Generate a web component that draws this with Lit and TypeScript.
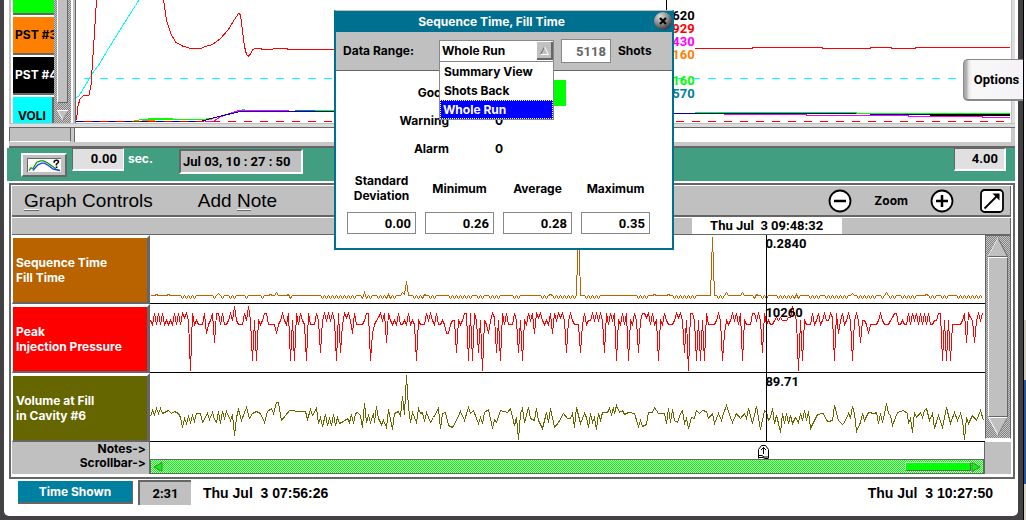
import { LitElement, html, css, nothing } from "lit";
import { customElement, property, state } from "lit/decorators.js";

type Sample = [number, number];

const HISTORY_START = 150;
const HISTORY_WIDTH = 835;
const CURSOR_X = 766;

/* Injection pressure: one level per shot, a shot every two units. */
const PRESSURE_LEVELS = [306.5, 313.5, 317.5, 320.5, 324.5, 333.5, 342.5, 352.5, 360.5, 371];
const PRESSURE =
  "3414141434" + "3414141213" + "9143444154" + "3161141443" + "1303444130" + "3838343114" +
  "4445431341" + "8381413481" + "4441373131" + "31381741" +
  "2135144443" + "1185432131" + "6134341443" + "4143483444" + "1313414434" + "5543373431" +
  "1818137393" + "4531273814" + "1444137383" + "4131512134" + "3415131213" + "7313444741" +
  "4331313137" + "1413183414" + "1834137311" + "2141438341" + "34443121" +
  "3739113838" + "3814444313" + "8534313141" + "8344411313" + "7143443232" + "3332201393" +
  "8344414314" + "3133128153" + "1431383136" + "3345444431" + "3444321144" + "3441413141" +
  "4141443311" + "8383844444" + "3161236313" + "1";

const pressureTrace: Sample[] = [...PRESSURE].map((level, i) => [
  HISTORY_START + 0.5 + i * 2,
  PRESSURE_LEVELS[Number(level)],
]);

/* Fill time: flat, with short runs of jitter and a few peaks. */
const FILL_JITTER: Sample[] = [
  [181, 197], [211, 218], [220, 224], [229, 236], [243, 246], [262, 265], [289, 292], [319, 354],
  [361, 372], [378, 386], [390, 394], [414, 422], [427, 437], [447, 470], [475, 485], [489, 499],
  [513, 519], [539, 549], [553, 575], [583, 601], [637, 649], [674, 694], [715, 727], [751, 756],
  [759, 766], [775, 800], [810, 820], [826, 834], [838, 849], [856, 874], [879, 885], [889, 897],
  [902, 915], [928, 937], [941, 947], [958, 982],
];
const FILL_PEAKS = new Map<number, number>([
  [156, 294], [168, 294], [218, 293], [270, 294], [276, 292], [288, 294], [364, 292], [388, 294],
  [402, 292], [404, 294], [406, 281], [424, 294], [550, 294], [578, 215], [654, 294], [668, 294],
  [712, 237], [726, 292], [742, 292], [756, 294], [796, 294], [852, 293], [886, 292], [926, 294],
]);

const fillTrace: Sample[] = [];
for (let x = HISTORY_START; x <= 983; x += 2) {
  const peak = FILL_PEAKS.get(x);
  const jitter = FILL_JITTER.some(([a, b]) => x >= a && x <= b) && x % 4 === 2;
  fillTrace.push([x + 0.5, (peak ?? (jitter ? 298 : 295)) + 0.5]);
}

const VOLUME = `150,416 152,410 154,414 156,408 158,413 160,408 162,413 168,410 171,413 174,411 178,413 180,417
182,427 184,418 186,423 188,416 190,422 192,415 194,421 196,413 200,413 202,422 207,413 209,419 212,412 214,419
216,422 218,411 220,423 222,411 224,418 226,411 230,420 232,414 234,435 236,417 238,409 241,420 246,407 249,418
252,413 256,411 260,413 264,422 267,411 271,408 273,413 276,402 278,402 281,420 289,410 300,411 305,411 307,419
310,409 312,415 316,408 318,423 320,417 322,426 325,414 327,425 329,418 331,425 333,414 335,425 337,417 339,423
343,421 347,418 349,422 351,414 353,423 355,413 357,412 360,415 362,427 364,403 366,422 368,415 370,422 373,413
374,422 376,406 378,418 381,424 383,420 386,427 388,409 392,429 394,413 398,411 400,416 402,396 404,414 406,375
408,407 410,422 412,412 416,422 418,408 420,413 422,412 424,421 426,412 430,422 433,417 438,408 440,428 442,413
445,412 448,425 452,427 456,420 460,411 464,420 468,407 470,413 473,410 478,423 480,417 482,423 484,412 488,409
492,428 494,419 496,422 500,410 507,412 510,408 514,425 516,417 518,439 520,413 522,408 524,422 528,407 530,418
534,420 536,408 538,420 542,428 546,412 548,422 550,408 554,427 558,422 563,413 567,418 570,418 572,413 574,427
576,407 580,423 584,413 586,417 588,427 590,413 592,422 594,417 596,429 598,413 600,420 602,412 607,412 609,408
611,414 613,407 614,413 616,405 619,412 622,410 624,414 628,412 634,413 638,426 640,420 642,426 646,424 648,412
652,412 654,407 658,413 664,413 666,423 668,408 670,422 672,409 674,420 677,422 680,413 682,410 684,423 686,418
688,428 691,417 694,418 696,410 699,413 702,410 706,411 708,418 712,413 714,423 718,413 721,420 723,413 726,405
730,417 732,422 736,413 740,418 744,413 746,418 748,408 752,423 756,406 760,429 764,410 766,412 768,420 770,417
772,408 774,423 776,415 778,423 780,432 782,413 784,423 786,413 788,423 790,415 792,423 795,417 798,422 800,413
802,420 804,410 806,420 808,411 810,428 814,420 817,414 823,413 826,420 828,421 832,420 834,405 838,420 842,424
844,422 848,413 850,417 852,406 854,413 856,431 860,422 862,413 864,420 868,412 874,413 876,412 878,423 880,413
882,422 884,413 886,403 888,413 890,415 892,425 897,412 903,410 907,413 908,423 910,418 912,432 914,412 916,417
920,412 922,417 924,410 926,408 929,420 932,413 934,428 938,415 942,427 946,407 948,415 950,423 954,412 957,420
960,413 962,420 964,439 966,417 968,423 972,415 976,420 980,410 983,420`;
const volumeTrace = VOLUME.split(/\s+/).map((p) => p.split(",").map((n) => Number(n) + 0.5) as Sample);

const toPoints = (trace: Sample[]) => trace.map((p) => p.join(",")).join(" ");

const base = css`
  *,
  *::before,
  *::after {
    box-sizing: border-box;
  }
  button,
  input,
  select {
    font: inherit;
    color: inherit;
    margin: 0;
    border-radius: 0;
  }
  svg {
    display: block;
  }
  .stipple {
    background: repeating-conic-gradient(#808080 0 25%, #c8c8c8 0 50%) 0 0 / 2px 2px;
  }
`;

@customElement("cycle-plot")
class CyclePlot extends LitElement {
  static styles = [
    base,
    css`
      :host {
        display: grid;
        grid-template-columns: 67px minmax(0, 1fr) 4px;
        background: #c0c0c0;
        border-bottom: 1px solid #666;
      }
      .channels {
        display: grid;
        grid-template-columns: 43px 17px 5px;
        height: 123px;
        overflow: hidden;
        border-left: 2px solid #c0c0c0;
      }
      .list {
        display: flex;
        flex-direction: column;
        justify-content: flex-end;
        overflow: hidden;
        background: #fff;
        min-width: 0;
      }
      .channel {
        flex: none;
        width: 52px;
        height: 38px;
        margin: 0 0 2px 2px;
        padding: 0 0 0 2px;
        border: 0;
        border-bottom: 2px solid #666;
        text-align: left;
        white-space: nowrap;
      }
      .channel.last {
        height: 26px;
        width: 41px;
        margin-bottom: 0;
        padding: 12px 0 0 5px;
        border-bottom: 0;
        border-right: 2px solid #666;
        line-height: 12px;
      }
      .green { background: #0f0; }
      .orange { background: #ff8000; color: #000; }
      .black { background: #000; color: #fff; }
      .cyan { background: #0ff; color: #000; }
      .scroll {
        display: flex;
        flex-direction: column;
        justify-content: space-between;
        align-items: center;
      }
      .thumb {
        width: 11px;
        height: 103px;
        background: #c0c0c0;
        border: solid #666;
        border-width: 0 1px 1px 0;
        border-left: 1px solid #fff;
      }
      .down { width: 12px; height: 14px; }
      .gap {
        background: #c0c0c0;
        border-left: 2px solid #fff;
        border-right: 1px solid #666;
      }
      .canvas {
        position: relative;
        background: #fff;
      }
      .canvas svg { width: 100%; height: 122px; }
      .readings {
        position: absolute;
        top: 9px;
        left: 63.6%;
        width: 24px;
        text-align: right;
        font: bold 13px/13px Roboto, sans-serif;
      }
      .readings .skip { height: 13px; }
      .edge { border-left: 1px solid #c0c0c0; background: #ddd; }
      .rail {
        grid-column: 1 / -1;
        height: 4px;
        background: #ddd;
        border-top: 1px solid #c0c0c0;
      }
    `,
  ];

  render() {
    const readings: [string, string][] = [
      ["620", "#000"], ["929", "#f00"], ["430", "#f0f"], ["160", "#ff8000"],
      ["", ""], ["160", "#0f0"], ["570", "#0080a0"],
    ];
    return html`
      <div class="channels">
        <div class="list">
          <button class="channel green" aria-label="PST 2"></button>
          <button class="channel orange">PST #3</button>
          <button class="channel black">PST #4</button>
          <button class="channel cyan last">VOLI</button>
        </div>
        <div class="scroll stipple">
          <div class="thumb"></div>
          <svg class="down" viewBox="0 0 12 14">
            <path d="M.5 1.5h11L6 11z" fill="#c0c0c0" stroke="#fff" />
            <path d="M11.5 1.5 6 11" fill="none" stroke="#666" />
          </svg>
        </div>
        <div class="gap"></div>
      </div>
      <div class="canvas">
        <svg viewBox="76 0 935 122" preserveAspectRatio="none" fill="none" shape-rendering="crispEdges">
          <path d="M84 78.5H957" stroke="#0ff" stroke-dasharray="8 8" />
          <path d="M76.5 97.5 79 96 92 74l8-11 10-17 20-32 9-14" stroke="#0ff" />
          <path
            d="M76.500 120 78 106l2-7 3-3 6-1 2-10 1-15 2-30L96.500 0M163.500 0l3 20 4 13 5 9 7 4 8 2.500h10l5-2 7-2 8-6 8-9 6-10 4-6 2 1 2 17 2 15 2 8 2 1.500 2-2 2-4 3-2h4l3 1.500h8l5-1h10l4 1h49M695 48.500h57v-1h70v1h48v-1h21v1h24v-1h95"
            stroke="#f00"
          />
          <path d="M134 121l8-1.500h58M142 119.500l13-1h17v1h28l12-1 28-8 5-1" stroke="#0f0" />
          <path d="M142 120.500h13M208 119.500h4" stroke="#ff8000" />
          <path d="M205 121.500h8l8-5 18-6h50" stroke="#f0f" />
          <path d="M76 121.500h124l15-4 25-6h58M295 111.500h45M673 113.500h135l122 1h80" stroke="#00a" />
          <path d="M295 110.500h20" stroke="#0080a0" />
          <path d="M315 110.500h20M695 112.500h161v1h154" stroke="#0f0" />
          <path d="M724 114.500h82v1h102v1h74v1h28" stroke="#f0f" />
          <path d="M930 114.500h80" stroke="#000" stroke-width="2" />
          <path d="M84 121.500h926" stroke="#f00" stroke-dasharray="8 8" />
          <path d="M666.500 0v122" stroke="#000" />
        </svg>
        <div class="readings">
          ${readings.map(([value, color]) =>
            value ? html`<div style="color:${color}">${value}</div>` : html`<div class="skip"></div>`)}
        </div>
      </div>
      <div class="edge"></div>
      <div class="rail"></div>
    `;
  }
}

@customElement("time-bar")
class TimeBar extends LitElement {
  static styles = [
    base,
    css`
      :host { display: block; }
      .strip {
        display: grid;
        grid-template-columns: 62px minmax(0, 1fr);
        gap: 3px;
        height: 20px;
        padding: 0 4px 4px 0;
        margin: 0 0 0 2px;
        background: #c8c8c8;
        border-bottom: 2px solid #666;
      }
      .blank {
        border-left: 1px solid #666;
        border-bottom: 1px solid #fff;
        border-right: 1px solid #666;
        background: #c0c0c0;
      }
      .white { background: #fff; border-left: 1px solid #666; }
      .green {
        display: flex;
        align-items: flex-start;
        height: 33px;
        padding: 0 9px 0 14px;
        background: #429e80;
        font: bold 13px/16px Roboto, sans-serif;
      }
      .trend {
        width: 46px;
        height: 24px;
        margin: 5px 5px 0 0;
        padding: 3px 4px;
        background: #c0c0c0;
        border: 2px solid;
        border-color: #fff #666 #666 #fff;
      }
      .trend svg { width: 100%; height: 100%; background: #fff; border: 1px solid #666; border-width: 1px 0 0 1px; }
      .num {
        width: 52px;
        height: 23px;
        padding: 0 6px 2px 0;
        text-align: right;
        border: 1px solid #666;
        border-color: #666 #fff #fff #666;
        border-bottom-width: 2px;
        background: #e0e0e0;
      }
      .unit { margin: 3px 26px 0 4px; color: #fff; font: bold 12px/16px Inter, sans-serif; }
      .stamp {
        width: 124px;
        height: 25px;
        margin-top: 1px;
        padding: 0 2px;
        border: 2px solid;
        border-color: #666 #fff #fff #666;
        background: #c0c0c0;
      }
      .spacer { flex: 1; }
      .end { border-right-width: 2px; }
    `,
  ];

  render() {
    return html`
      <div class="strip"><div class="blank"></div><div class="white"></div></div>
      <div class="green">
        <button class="trend" aria-label="Trend help">
          <svg viewBox="0 0 34 14" preserveAspectRatio="none" fill="none">
            <path d="M1 12.500l2-3 2 1 4-7 4-1.500h3l4 2 4 3 5 4 4 1.500" stroke="#00a000" stroke-width="1.300" />
            <path d="M5 12.500l5-6 4-2h3l4 2.500 5 4 7 1.500" stroke="#2030ff" stroke-width="1.300" />
            <path d="M27 4V2.500q2.500-2.500 4.500 0 0 2-2.200 3V7M28.500 9h1.800" stroke="#000" stroke-width="1.600" />
          </svg>
        </button>
        <input class="num" aria-label="Start seconds" value="0.00" />
        <span class="unit">sec.</span>
        <input class="stamp" aria-label="Shot time" value="Jul 03, 10 : 27 : 50" />
        <div class="spacer"></div>
        <input class="num end" aria-label="End seconds" value="4.00" />
      </div>
    `;
  }
}

@customElement("history-track")
class HistoryTrack extends LitElement {
  @property() first = "";
  @property() second = "";
  @property() color = "#000";
  @property() reading = "";
  @property({ type: Number }) top = 235;
  @property({ attribute: false }) trace: Sample[] = [];

  static styles = [
    base,
    css`
      :host {
        display: grid;
        grid-template-columns: 138px minmax(0, 1fr);
        height: 69px;
      }
      .name {
        display: flex;
        align-items: center;
        padding: 0 3px;
        color: #fff;
        border: solid;
        border-width: 3px 3px 2px 1px;
        border-color: #fff #666 #666 #fff;
        text-align: left;
        line-height: 15px;
      }
      .pane { position: relative; border-bottom: 1px solid #000; background: #fff; }
      .pane svg { width: 100%; height: 68px; }
      .value {
        position: absolute;
        left: 73.7%;
        top: 1px;
        font: bold 13px/16px Roboto, sans-serif;
      }
    `,
  ];

  render() {
    return html`
      <button class="name" style="background-color:${this.color}">
        <span>${this.first}<br />${this.second}</span>
      </button>
      <div class="pane">
        <svg
          viewBox="${HISTORY_START} ${this.top} ${HISTORY_WIDTH} 68"
          preserveAspectRatio="none"
          fill="none"
          shape-rendering="crispEdges"
        >
          <polyline points=${toPoints(this.trace)} stroke=${this.color} />
          <path d="M${CURSOR_X}.5 ${this.top}v69" stroke="#000" />
        </svg>
        <span class="value">${this.reading}</span>
      </div>
    `;
  }
}

@customElement("history-panel")
class HistoryPanel extends LitElement {
  static styles = [
    base,
    css`
      :host {
        display: block;
        margin: 2px 3px 0 5px;
        padding: 1px 2px 3px 1px;
        border: 2px solid #666;
      }
      .menu {
        display: flex;
        align-items: center;
        height: 31px;
        padding: 0 6px 0 8px;
        background: #c0c0c0;
        border-bottom: 2px solid #666;
        border-right: 1px solid #666;
      }
      .item {
        border: 0;
        padding: 0 4px;
        margin-right: 37px;
        background: none;
        font: 19px/24px "Liberation Sans", Arial, sans-serif;
      }
      .key { border-bottom: 1px solid #fff; box-shadow: 0 1px #666; display: inline-block; line-height: 17px; }
      .spacer { flex: 1; }
      .zoom { margin: 0 22px; }
      .icon { border: 0; background: none; padding: 0; width: 24px; height: 24px; }
      .full { margin-left: 26px; }
      .dates {
        position: relative;
        height: 17px;
        margin-top: 1px;
        background: #c0c0c0;
        border-bottom: 1px solid #666;
        border-right: 1px solid #666;
      }
      .date {
        position: absolute;
        left: 68.1%;
        top: 0;
        width: 150px;
        height: 16px;
        background: #fff;
        text-align: center;
        white-space: pre;
        font: bold 13px/16px Roboto, sans-serif;
      }
      .body { display: grid; grid-template-columns: minmax(0, 1fr) 26px; }
      .vscroll {
        display: flex;
        flex-direction: column;
        height: 204px;
        padding: 1px 2px;
        border: 1px solid #666;
        border-bottom-color: #fff;
      }
      .vscroll svg { width: 20px; height: 20px; flex: none; }
      .thumb {
        flex: 1;
        background: #c0c0c0;
        border: 1px solid;
        border-color: #fff #666 #666 #fff;
      }
      .notes { display: grid; grid-template-columns: 138px minmax(0, 1fr); height: 32px; background: #c0c0c0; }
      .tags {
        padding-right: 3px;
        text-align: right;
        line-height: 14px;
        border-right: 1px solid #666;
        font-variant-ligatures: none;
        font-feature-settings: "calt" 0;
      }
      .tracks { display: flex; flex-direction: column; justify-content: space-between; background: #fff; border-right: 1px solid #666; }
      .flag { width: 11px; height: 14px; margin: 3px 0 0 72.900%; }
      .hscroll {
        display: flex;
        align-items: center;
        height: 15px;
        padding: 1px 2px;
        border: 1px solid #666;
        background: repeating-conic-gradient(#0f0 0 25%, #c8ffc8 0 50%) 0 0 / 2px 2px;
      }
      .hscroll svg { width: 10px; height: 10px; flex: none; }
      .hthumb {
        width: 66px;
        height: 9px;
        margin-left: auto;
        background: #0f0;
        border: 1px solid;
        border-color: #c8ffc8 #666 #666 #c8ffc8;
      }
    `,
  ];

  render() {
    return html`
      <div class="menu">
        <button class="item"><span class="key">G</span>raph Controls</button>
        <button class="item">Add <span class="key">N</span>ote</button>
        <div class="spacer"></div>
        <button class="icon" aria-label="Zoom out">
          <svg viewBox="0 0 24 24"><circle cx="12" cy="12" r="10.500" fill="#fff" stroke="#000" stroke-width="1.800" /><path d="M6 12h12" stroke="#000" stroke-width="2.500" /></svg>
        </button>
        <span class="zoom">Zoom</span>
        <button class="icon" aria-label="Zoom in">
          <svg viewBox="0 0 24 24"><circle cx="12" cy="12" r="10.500" fill="#fff" stroke="#000" stroke-width="1.800" /><path d="M6 12h12M12 6v12" stroke="#000" stroke-width="2.500" /></svg>
        </button>
        <button class="icon full" aria-label="Full view">
          <svg viewBox="0 0 24 24"><rect x="1" y="1" width="22" height="22" rx="3.500" fill="#fff" stroke="#000" stroke-width="1.800" /><path d="M4.500 19.500 18 6" stroke="#000" stroke-width="1.800" /><path d="M12.500 4.500h7v7z" /></svg>
        </button>
      </div>
      <div class="dates"><div class="date">Thu Jul  3 09:48:32</div></div>
      <div class="body">
        <div>
          <history-track first="Sequence Time" second="Fill Time" color="#b86200" reading="0.2840" top="235" .trace=${fillTrace}></history-track>
          <history-track first="Peak" second="Injection Pressure" color="#ff0000" reading="10260" top="304" .trace=${pressureTrace}></history-track>
          <history-track first="Volume at Fill" second="in Cavity #6" color="#666600" reading="89.71" top="373" .trace=${volumeTrace}></history-track>
        </div>
        <div class="vscroll stipple">
          <svg viewBox="0 0 20 20"><path d="M.5 19.500 10 1l9.500 18.500z" fill="#c0c0c0" stroke="#666" /><path d="M.5 19 10 1" stroke="#fff" /></svg>
          <div class="thumb"></div>
          <svg viewBox="0 0 20 20"><path d="M.5.5h19L10 18z" fill="#c0c0c0" stroke="#fff" /><path d="M19.500.5 10 18" stroke="#666" /></svg>
        </div>
      </div>
      <div class="body">
        <div class="notes">
          <div class="tags">Notes-&gt;<br />Scrollbar-&gt;</div>
          <div class="tracks">
            <svg class="flag" viewBox="0 0 11 14" fill="none" stroke="#000">
              <path d="M.5 13.500V4.500L3.500.5h4l3 4v9" />
              <path d="M5.500 2v7M3 5l2.500-2.500L8 5" />
              <path d="M1 10.500h3l2 1.500h4M1 12.500h4l2 1h3" />
            </svg>
            <div class="hscroll">
              <svg viewBox="0 0 10 10"><path d="M9 .5v9L1 5z" fill="#0f0" stroke="#666" /></svg>
              <div class="hthumb"></div>
              <svg viewBox="0 0 10 10"><path d="M1 .5v9L9 5z" fill="#0f0" stroke="#666" /></svg>
            </div>
          </div>
        </div>
        <div class="notes"></div>
      </div>
    `;
  }
}

@customElement("range-dialog")
class RangeDialog extends LitElement {
  @state() private open = true;
  @state() private choice = "Whole Run";

  static styles = [
    base,
    css`
      :host {
        display: block;
        width: 340px;
        border: 2px solid #007090;
        border-top: 1px solid #c0c0c0;
        background: #fff;
      }
      .title {
        position: relative;
        height: 21px;
        background: #007090;
        color: #fff;
        text-align: center;
        line-height: 21px;
        padding-right: 25px;
      }
      .close {
        position: absolute;
        right: -1px;
        top: 0;
        width: 20px;
        height: 20px;
        padding: 0;
        border: 0;
        background: none;
      }
      .range {
        display: flex;
        align-items: center;
        height: 39px;
        padding: 0 20px 0 7px;
        background: #c0c0c0;
        border-bottom: 1px solid #666;
      }
      .combo { position: relative; margin-left: 25px; width: 115px; }
      .pick {
        display: block;
        width: 100%;
        height: 22px;
        padding: 0 2px;
        appearance: none;
        border: 1px solid #888;
        background: #fff;
      }
      .arrow { position: absolute; right: 1px; top: 2px; width: 16px; height: 18px; pointer-events: none; }
      .options {
        position: absolute;
        z-index: 1;
        top: 21px;
        left: 0;
        right: 0;
        margin: 0;
        padding: 0;
        list-style: none;
        background: #fff;
        border: 1px solid #888;
      }
      .option { height: 19px; padding: 0 4px; line-height: 19px; }
      .option.current { padding: 0 2px; background: #00f; color: #fff; border: 1px dotted #fff; line-height: 17px; }
      .shots {
        width: 50px;
        height: 24px;
        margin: 0 7px;
        padding: 0 4px 0 0;
        text-align: right;
        border: 1px solid #888;
        background: #fff;
        color: #666;
        font: bold 13px/16px Roboto, sans-serif;
      }
      .counts {
        display: grid;
        grid-template-columns: 113px 77px;
        grid-auto-rows: 26px;
        gap: 2px 40px;
        padding: 9px 0 0;
        align-items: center;
      }
      .label { text-align: right; }
      .count { padding-left: 6px; line-height: 26px; }
      .good { height: 26px; background: #0f0; }
      .stats {
        display: grid;
        grid-template-columns: repeat(4, 69px);
        gap: 9px;
        padding: 11px 0 14px 11px;
      }
      .stat { display: flex; flex-direction: column; gap: 9px; }
      .stat span {
        display: flex;
        align-items: center;
        justify-content: center;
        height: 30px;
        text-align: center;
        line-height: 15px;
      }
      .stat input {
        width: 100%;
        height: 22px;
        padding: 0 4px 0 0;
        text-align: right;
        border: 1px solid #888;
        background: #fff;
        font: bold 13px/16px Roboto, sans-serif;
      }
    `,
  ];

  private select(choice: string) {
    this.choice = choice;
    this.open = false;
  }

  render() {
    const ranges = ["Summary View", "Shots Back", "Whole Run"];
    const stats = [["Standard Deviation", "0.00"], ["Minimum", "0.26"], ["Average", "0.28"], ["Maximum", "0.35"]];
    return html`
      <div class="title">
        Sequence Time, Fill Time
        <button class="close" aria-label="Close">
          <svg viewBox="0 0 20 20">
            <defs>
              <radialGradient id="ball" cx=".35" cy=".25" r=".8">
                <stop offset="0" stop-color="#ddd" />
                <stop offset=".55" stop-color="#888" />
                <stop offset="1" stop-color="#333" />
              </radialGradient>
            </defs>
            <circle cx="10" cy="10" r="9" fill="url(#ball)" />
            <path d="M7 7l6 6M13 7l-6 6" stroke="#000" stroke-width="2.200" />
          </svg>
        </button>
      </div>
      <div class="range">
        <label for="range">Data Range:</label>
        <div class="combo">
          <select
            id="range"
            class="pick"
            .value=${this.choice}
            @mousedown=${(e: Event) => {
              e.preventDefault();
              this.open = !this.open;
            }}
          >
            ${ranges.map((r) => html`<option ?selected=${r === this.choice}>${r}</option>`)}
          </select>
          <svg class="arrow" viewBox="0 0 16 18">
            <path d="M0 0h16v18H0z" fill="#c0c0c0" />
            <path d="M15 0v17H0" fill="none" stroke="#666" stroke-width="2" />
            <path d="M3.500 12.500 7.500 5" stroke="#666" />
            <path d="M3.500 12.500h8L7.500 5" fill="none" stroke="#fff" />
          </svg>
          ${this.open
            ? html`<ul class="options" role="listbox" aria-label="Data range">
                ${ranges.map(
                  (r) => html`<li
                    role="option"
                    class=${r === this.choice ? "option current" : "option"}
                    aria-selected=${r === this.choice}
                    @click=${() => this.select(r)}
                  >${r}</li>`,
                )}
              </ul>`
            : nothing}
        </div>
        <input id="shots" class="shots" value="5118" readonly />
        <label for="shots">Shots</label>
      </div>
      <div class="counts">
        <span class="label">Good</span><span class="count good"></span>
        <span class="label">Warning</span><span class="count">0</span>
        <span class="label">Alarm</span><span class="count">0</span>
      </div>
      <div class="stats">
        ${stats.map(([name, value]) => html`<label class="stat"><span>${name}</span><input value=${value} readonly /></label>`)}
      </div>
    `;
  }
}

@customElement("app-root")
class AppRoot extends LitElement {
  static styles = [
    base,
    css`
      :host {
        position: relative;
        display: flex;
        min-height: 100vh;
        overflow: hidden;
        background: #434143;
        color: #000;
        font: bold 12px/16px Inter, sans-serif;
      }
      .frame {
        flex: 1;
        min-width: 0;
        margin: 0 5px 5px 4px;
        background: #fff;
        border-radius: 0 0 5px 5px;
      }
      .plot { margin: 0 3px 0 5px; }
      .time { margin: 0 3px; }
      .desktop {
        width: 3px;
        border-left: 1px solid #000;
        background: linear-gradient(#fff 0 320px, #d0ccc0 320px 380px, #2858a0 380px 484px, #d8d4c8 484px);
      }
      .dialog { position: absolute; left: 334px; top: 10px; z-index: 2; }
      .side {
        position: absolute;
        right: 3px;
        top: 59px;
        width: 60px;
        height: 42px;
        padding: 0 0 0 6px;
        border: 1px solid #888;
        border-width: 1px 0 2px 1px;
        border-radius: 5px 0 0 5px;
        background: linear-gradient(90deg, #aaa 0 2px, #e8e8e8 5px, #f8f8f8 8px, #f4f2f6);
        font: bold 13px/16px Roboto, sans-serif;
      }
      .foot {
        display: flex;
        align-items: center;
        gap: 5px;
        height: 37px;
        padding: 0 25px 10px 14px;
        font: bold 14px/18px "Liberation Sans", Arial, sans-serif;
        white-space: pre;
      }
      .shown {
        width: 115px;
        height: 23px;
        padding: 0;
        border: solid #666;
        border-width: 0 1px 2px 0;
        background: #0080a0;
        color: #fff;
        font: bold 12px/16px Inter, sans-serif;
      }
      .span {
        width: 53px;
        height: 25px;
        padding: 0;
        text-align: center;
        border: solid #666;
        border-width: 2px 0 0 2px;
        background: #c0c0c0;
        font: bold 13px/16px Roboto, sans-serif;
      }
      .from { margin-left: 7px; }
      .to { margin-left: auto; }
    `,
  ];

  render() {
    return html`
      <main class="frame">
        <cycle-plot class="plot"></cycle-plot>
        <time-bar class="time"></time-bar>
        <history-panel></history-panel>
        <div class="foot">
          <button class="shown">Time Shown</button>
          <input class="span" aria-label="Time shown" value="2:31" />
          <span class="from">Thu Jul  3 07:56:26</span>
          <span class="to">Thu Jul  3 10:27:50</span>
        </div>
      </main>
      <div class="desktop"></div>
      <button class="side">Options</button>
      <range-dialog class="dialog" role="dialog" aria-label="Sequence Time, Fill Time"></range-dialog>
    `;
  }
}
